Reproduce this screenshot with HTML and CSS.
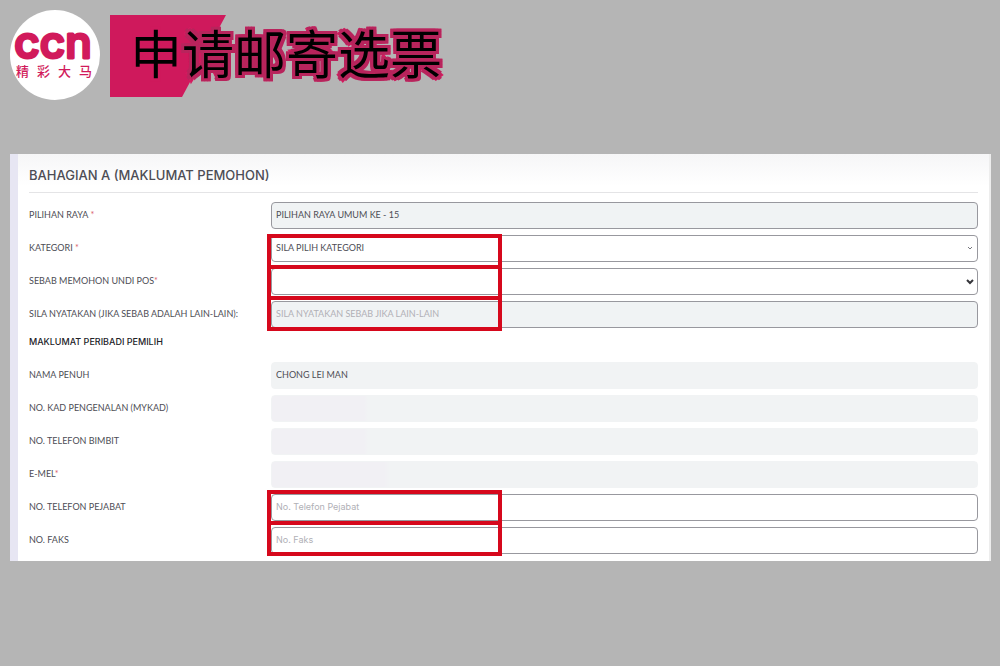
FILE: index.html
```html
<!DOCTYPE html>
<html lang="ms">
<head>
<meta charset="utf-8">
<meta name="viewport" content="width=device-width, initial-scale=1">
<title>申请邮寄选票</title>
<link rel="stylesheet" href="styles.css">
</head>
<body>
<header class="masthead">
  <svg class="logo" viewBox="0 0 90 90" role="img" aria-label="ccn 精彩大马">
    <circle cx="45" cy="45" r="45" fill="#fff"/>
    <text class="logo-name" x="43" y="48" text-anchor="middle">ccn</text>
    <text class="logo-sub" x="6 27 48 69" y="66">精彩大马</text>
  </svg>
  <div class="banner">
    <svg class="banner-shape" viewBox="0 0 116 82" aria-hidden="true"><path d="M0 0H116L72 82H0Z" fill="#cf195c"/></svg>
    <h1 class="title" lang="zh"><span class="title-plain">申</span>请邮寄选票</h1>
  </div>
</header>
<main class="panel">
  <h2 class="section-title">BAHAGIAN A (MAKLUMAT PEMOHON)</h2>
  <form class="form">
    <div class="row">
      <label class="label" for="pilihan">PILIHAN RAYA <span class="req">*</span></label>
      <input class="field muted" id="pilihan" value="PILIHAN RAYA UMUM KE - 15" readonly>
    </div>
    <div class="group">
      <div class="row">
        <label class="label" for="kategori">KATEGORI <span class="req">*</span></label>
        <div class="select-wrap">
          <select class="field" id="kategori"><option>SILA PILIH KATEGORI</option></select>
          <svg class="chevron light" viewBox="0 0 8 6" aria-hidden="true"><path d="M2 1L4 3L6 1"/></svg>
        </div>
      </div>
      <div class="row">
        <label class="label" for="sebab">SEBAB MEMOHON UNDI POS<span class="req">*</span></label>
        <div class="select-wrap">
          <select class="field" id="sebab"><option></option></select>
          <svg class="chevron" viewBox="0 0 8 6" aria-hidden="true"><path d="M1 1L4 4L7 1"/></svg>
        </div>
      </div>
      <div class="row">
        <label class="label" for="nyatakan">SILA NYATAKAN (JIKA SEBAB ADALAH LAIN-LAIN):</label>
        <input class="field muted" id="nyatakan" placeholder="SILA NYATAKAN SEBAB JIKA LAIN-LAIN">
      </div>
      <div class="marks" aria-hidden="true"><i class="mark"></i><i class="mark"></i><i class="mark"></i></div>
    </div>
    <h3 class="subtitle">MAKLUMAT PERIBADI PEMILIH</h3>
    <div class="row">
      <label class="label" for="nama">NAMA PENUH</label>
      <input class="field plain" id="nama" value="CHONG LEI MAN" readonly>
    </div>
    <div class="row">
      <label class="label" for="mykad">NO. KAD PENGENALAN (MYKAD)</label>
      <input class="field plain hidden-short" id="mykad" readonly>
    </div>
    <div class="row">
      <label class="label" for="bimbit">NO. TELEFON BIMBIT</label>
      <input class="field plain hidden-short" id="bimbit" readonly>
    </div>
    <div class="row">
      <label class="label" for="emel">E-MEL<span class="req">*</span></label>
      <input class="field plain hidden-long" id="emel" readonly>
    </div>
    <div class="group">
      <div class="row">
        <label class="label" for="pejabat">NO. TELEFON PEJABAT</label>
        <input class="field mixed" id="pejabat" placeholder="No. Telefon Pejabat">
      </div>
      <div class="row">
        <label class="label" for="faks">NO. FAKS</label>
        <input class="field mixed" id="faks" placeholder="No. Faks">
      </div>
      <div class="marks marks-pair" aria-hidden="true"><i class="mark"></i><i class="mark"></i></div>
    </div>
  </form>
</main>
</body>
</html>
```
FILE: styles.css
```css
* { box-sizing: border-box; }
body {
  margin: 0;
  padding: 10px 9px 10px 10px;
  min-height: 100vh;
  background: #b5b5b5;
  color: #4d4d55;
  font-family: Inter, "Noto Sans CJK SC", sans-serif;
}
.masthead { display: flex; gap: 10px; margin-bottom: 54px; }
.logo { width: 90px; height: 90px; fill: #d11a5b; }
.logo-name {
  font: 500 44px Inter, sans-serif;
  stroke: #d11a5b;
  stroke-width: 3px;
  stroke-linejoin: round;
}
.logo-sub { font: 500 13px "Noto Sans CJK SC", sans-serif; }
.banner { display: grid; padding-top: 5px; }
.banner-shape { grid-area: 1 / 1; width: 116px; height: 82px; }
.title {
  grid-area: 1 / 1;
  margin: 0 0 0 20px;
  color: #000;
  font: 400 52px/74px "Noto Sans CJK SC", sans-serif;
  -webkit-text-stroke: 6px #d61b60;
  paint-order: stroke fill;
  text-shadow: 3px 0 #b8245c, -3px 0 #b8245c, 0 3px #b8245c, 0 -3px #b8245c, 3px 3px #b8245c, -3px 3px #b8245c, 3px -3px #b8245c, -3px -3px #b8245c;
}
.title-plain { -webkit-text-stroke-color: #cf195c; text-shadow: none; }
.panel {
  padding: 13px 11px 7px;
  border-left: 8px solid #e7e6f3;
  border-right: 2px solid #ededed;
  background: linear-gradient(#f6f6f7, #fff 32px);
}
.section-title {
  margin: 0 0 9px;
  padding-bottom: 8px;
  border-bottom: 1px solid #e4e4e6;
  font-size: 13px;
  font-weight: 500;
  line-height: 17px;
}
.form, .group { display: flex; flex-direction: column; gap: 6px; }
.group { position: relative; }
.row { display: grid; grid-template-columns: 242px 1fr; align-items: center; }
.label { font: 400 9px/12px Lato, sans-serif; padding-bottom: 2px; }
.req { color: #d8616b; }
.subtitle {
  margin: 0;
  padding-bottom: 6px;
  color: #222228;
  font-size: 9px;
  font-weight: 500;
  line-height: 16px;
}
.select-wrap { display: grid; align-items: center; }
.field {
  appearance: none;
  width: 100%;
  height: 27px;
  margin: 0;
  padding: 0 4px 2px;
  border: 1px solid #98989e;
  border-radius: 4px;
  background: #fff;
  color: #4d4d55;
  font: 400 9px/12px Lato, sans-serif;
}
.mixed { font-family: Inter, sans-serif; }
.select-wrap .field, .chevron { grid-area: 1 / 1; }
.field::placeholder { color: #b0b0b6; opacity: 1; }
.muted { background: #f0f3f4; }
.plain { border-color: #f1f3f4; background: #f1f3f4; }
.hidden-short { background: linear-gradient(90deg, #f1f0f4 92px, #f1f3f4 96px); }
.hidden-long { background: linear-gradient(90deg, #f1f0f4 112px, #f1f3f4 118px); }
.chevron {
  justify-self: end;
  width: 8px;
  height: 6px;
  margin-right: 4px;
  fill: none;
  stroke: #36363b;
  stroke-width: 2;
  pointer-events: none;
}
.chevron.light { stroke: #77777d; stroke-width: 1; }
.marks {
  position: absolute;
  top: -1px;
  bottom: -3px;
  left: 238px;
  width: 235px;
  display: grid;
  grid-auto-rows: 1fr;
  border-top: 4px solid #d6081c;
  pointer-events: none;
}
.marks-pair { top: -4px; bottom: -2px; }
.mark { border: 4px solid #d6081c; border-top: 0; }
```
